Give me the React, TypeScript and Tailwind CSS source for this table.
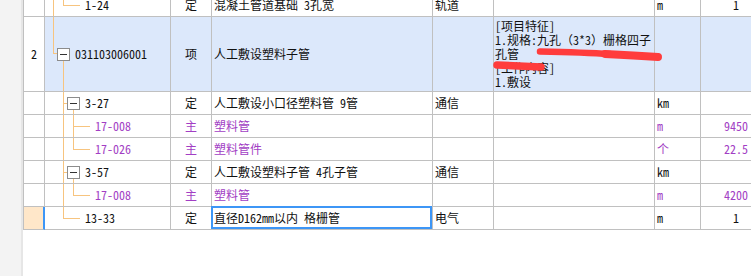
import React from 'react';

type Seg = [number, number, number, number];

interface TreeSpec {
  lines: Seg[];
  box?: number; // left x of the collapse box
  indent: number;
}

interface Row {
  num?: string;
  code: string;
  type: string;
  name: string;
  spec?: string;
  unit?: string;
  qty?: string;
  purple?: boolean;
  tall?: boolean;
  highlight?: boolean;
  selected?: boolean;
  tree: TreeSpec;
}

const LINE = '#f7c47f';

// mid of a 22px row is 11, of the 74px row is 36
const rows: Row[] = [
  {
    code: '1-24',
    type: '定',
    name: '混凝土管道基础 3孔宽',
    spec: '轨道',
    unit: 'm',
    qty: '1',
    tree: { lines: [[8, 0, 8, 22], [18, 0, 18, 11], [18, 11, 35, 11]], indent: 40 },
  },
  {
    num: '2',
    code: '031103006001',
    type: '项',
    name: '人工敷设塑料子管',
    tall: true,
    highlight: true,
    tree: { lines: [[8, 0, 8, 36], [8, 36, 12, 36], [18, 42, 18, 74]], box: 12, indent: 30 },
  },
  {
    code: '3-27',
    type: '定',
    name: '人工敷设小口径塑料管 9管',
    spec: '通信',
    unit: 'km',
    tree: { lines: [[18, 0, 18, 22], [18, 11, 22, 11], [28, 17, 28, 22]], box: 22, indent: 40 },
  },
  {
    code: '17-008',
    type: '主',
    name: '塑料管',
    unit: 'm',
    qty: '9450',
    purple: true,
    tree: { lines: [[18, 0, 18, 22], [28, 0, 28, 22], [28, 11, 45, 11]], indent: 50 },
  },
  {
    code: '17-026',
    type: '主',
    name: '塑料管件',
    unit: '个',
    qty: '22.5',
    purple: true,
    tree: { lines: [[18, 0, 18, 22], [28, 0, 28, 11], [28, 11, 45, 11]], indent: 50 },
  },
  {
    code: '3-57',
    type: '定',
    name: '人工敷设塑料子管 4孔子管',
    spec: '通信',
    unit: 'km',
    tree: { lines: [[18, 0, 18, 22], [18, 11, 22, 11], [28, 17, 28, 22]], box: 22, indent: 40 },
  },
  {
    code: '17-008',
    type: '主',
    name: '塑料管',
    unit: 'm',
    qty: '4200',
    purple: true,
    tree: { lines: [[18, 0, 18, 22], [28, 0, 28, 11], [28, 11, 45, 11]], indent: 50 },
  },
  {
    code: '13-33',
    type: '定',
    name: '直径D162mm以内 格栅管',
    spec: '电气',
    unit: 'm',
    qty: '1',
    selected: true,
    tree: { lines: [[18, 0, 18, 11], [18, 11, 35, 11]], indent: 40 },
  },
];

function TreeLines({ tree, h }: { tree: TreeSpec; h: number }) {
  const mid = h / 2;
  return (
    <svg width={tree.indent} height={h} className="shrink-0" shapeRendering="crispEdges">
      {tree.lines.map(([x1, y1, x2, y2], i) => (
        <line key={i} x1={x1 + 0.5} y1={y1} x2={x2 + 0.5} y2={y2} stroke={LINE} strokeWidth={1}
          transform={y1 === y2 ? 'translate(-0.5,0.5)' : undefined} />
      ))}
      {tree.box !== undefined && (
        <g>
          <rect x={tree.box + 0.5} y={mid - 6 + 0.5} width={12} height={12} fill="#fff" stroke="#8c8c8c" />
          <line x1={tree.box + 3} y1={mid + 0.5} x2={tree.box + 10} y2={mid + 0.5} stroke="#333" />
        </g>
      )}
    </svg>
  );
}

export default function App() {
  return (
    <div className="relative w-[751px] h-[276px] overflow-hidden bg-white flex font-['Noto_Sans_Mono_CJK_SC','Noto_Sans_CJK_SC',sans-serif] text-[12px] text-[#111]">
      <div className="w-[21px] bg-[#f3f3f3] shrink-0" />
      <div className="w-[2px] bg-[#e6e6e6] shrink-0" />

      <div className="mt-[-6px] self-start border-l border-[#c0c0c0] shrink-0">
        {rows.map((row, idx) => {
          const h = row.tall ? 74 : 22;
          const bg = row.highlight ? 'bg-[#dce8fb]' : 'bg-white';
          const color = row.purple ? 'text-[#a23ec4]' : 'text-[#111]';
          return (
            <div key={idx} className={`flex ${row.tall ? 'h-[75px]' : 'h-[23px]'}`}>
              <div
                className={`w-[21px] flex items-center justify-center border-b border-[#c0c0c0] ${
                  row.selected ? 'bg-[#ffe7c9] border-r-2 border-r-[#3d96f6]' : 'bg-white border-r'
                }`}
              >
                {row.num}
              </div>
              <div className={`w-[126px] flex items-center border-r border-b border-[#c0c0c0] ${bg} ${color}`}>
                <TreeLines tree={row.tree} h={h} />
                <span className="whitespace-nowrap">{row.code}</span>
              </div>
              <div className={`w-[41px] flex items-center justify-center border-r border-b border-[#c0c0c0] ${bg} ${color}`}>
                {row.type}
              </div>
              <div className={`relative w-[221px] flex items-center pl-[2px] border-r border-b border-[#c0c0c0] ${bg} ${color}`}>
                <span className="whitespace-nowrap">{row.name}</span>
                {row.selected && (
                  <div className="absolute -left-px -top-px right-0 bottom-0 border-2 border-[#3d96f6]" />
                )}
              </div>
              <div className={`w-[61px] flex items-center pl-[2px] border-r border-b border-[#c0c0c0] ${bg}`}>
                {row.spec}
              </div>
              <div className={`w-[161px] flex items-center pl-[1px] border-r border-b border-[#c0c0c0] ${bg}`}>
                {row.tall && (
                  <div className="leading-[14px] whitespace-nowrap">
                    [项目特征]
                    <br />
                    1.规格:九孔（3*3）栅格四子
                    <br />
                    孔管
                    <br />
                    [工作内容]
                    <br />
                    1.敷设
                  </div>
                )}
              </div>
              <div className={`w-[46px] flex items-center pl-[2px] border-r border-b border-[#c0c0c0] ${bg} ${color}`}>
                {row.unit}
              </div>
              <div className={`w-[70px] flex items-center justify-center border-b border-[#c0c0c0] ${bg} ${color}`}>
                {row.qty}
              </div>
            </div>
          );
        })}
      </div>

      {/* red marker strokes over the feature text */}
      <svg className="absolute inset-0 pointer-events-none" width={751} height={276}>
        <path d="M540 51.5 Q585 52.5 610 54" stroke="#ff3c3c" strokeWidth={6.5} strokeLinecap="round" fill="none" />
        <path d="M605 54 Q635 55.5 658 57" stroke="#ff3c3c" strokeWidth={8} strokeLinecap="round" fill="none" />
        <path d="M497 65 L541 67" stroke="#ff3c3c" strokeWidth={7.5} strokeLinecap="round" fill="none" />
      </svg>
    </div>
  );
}
